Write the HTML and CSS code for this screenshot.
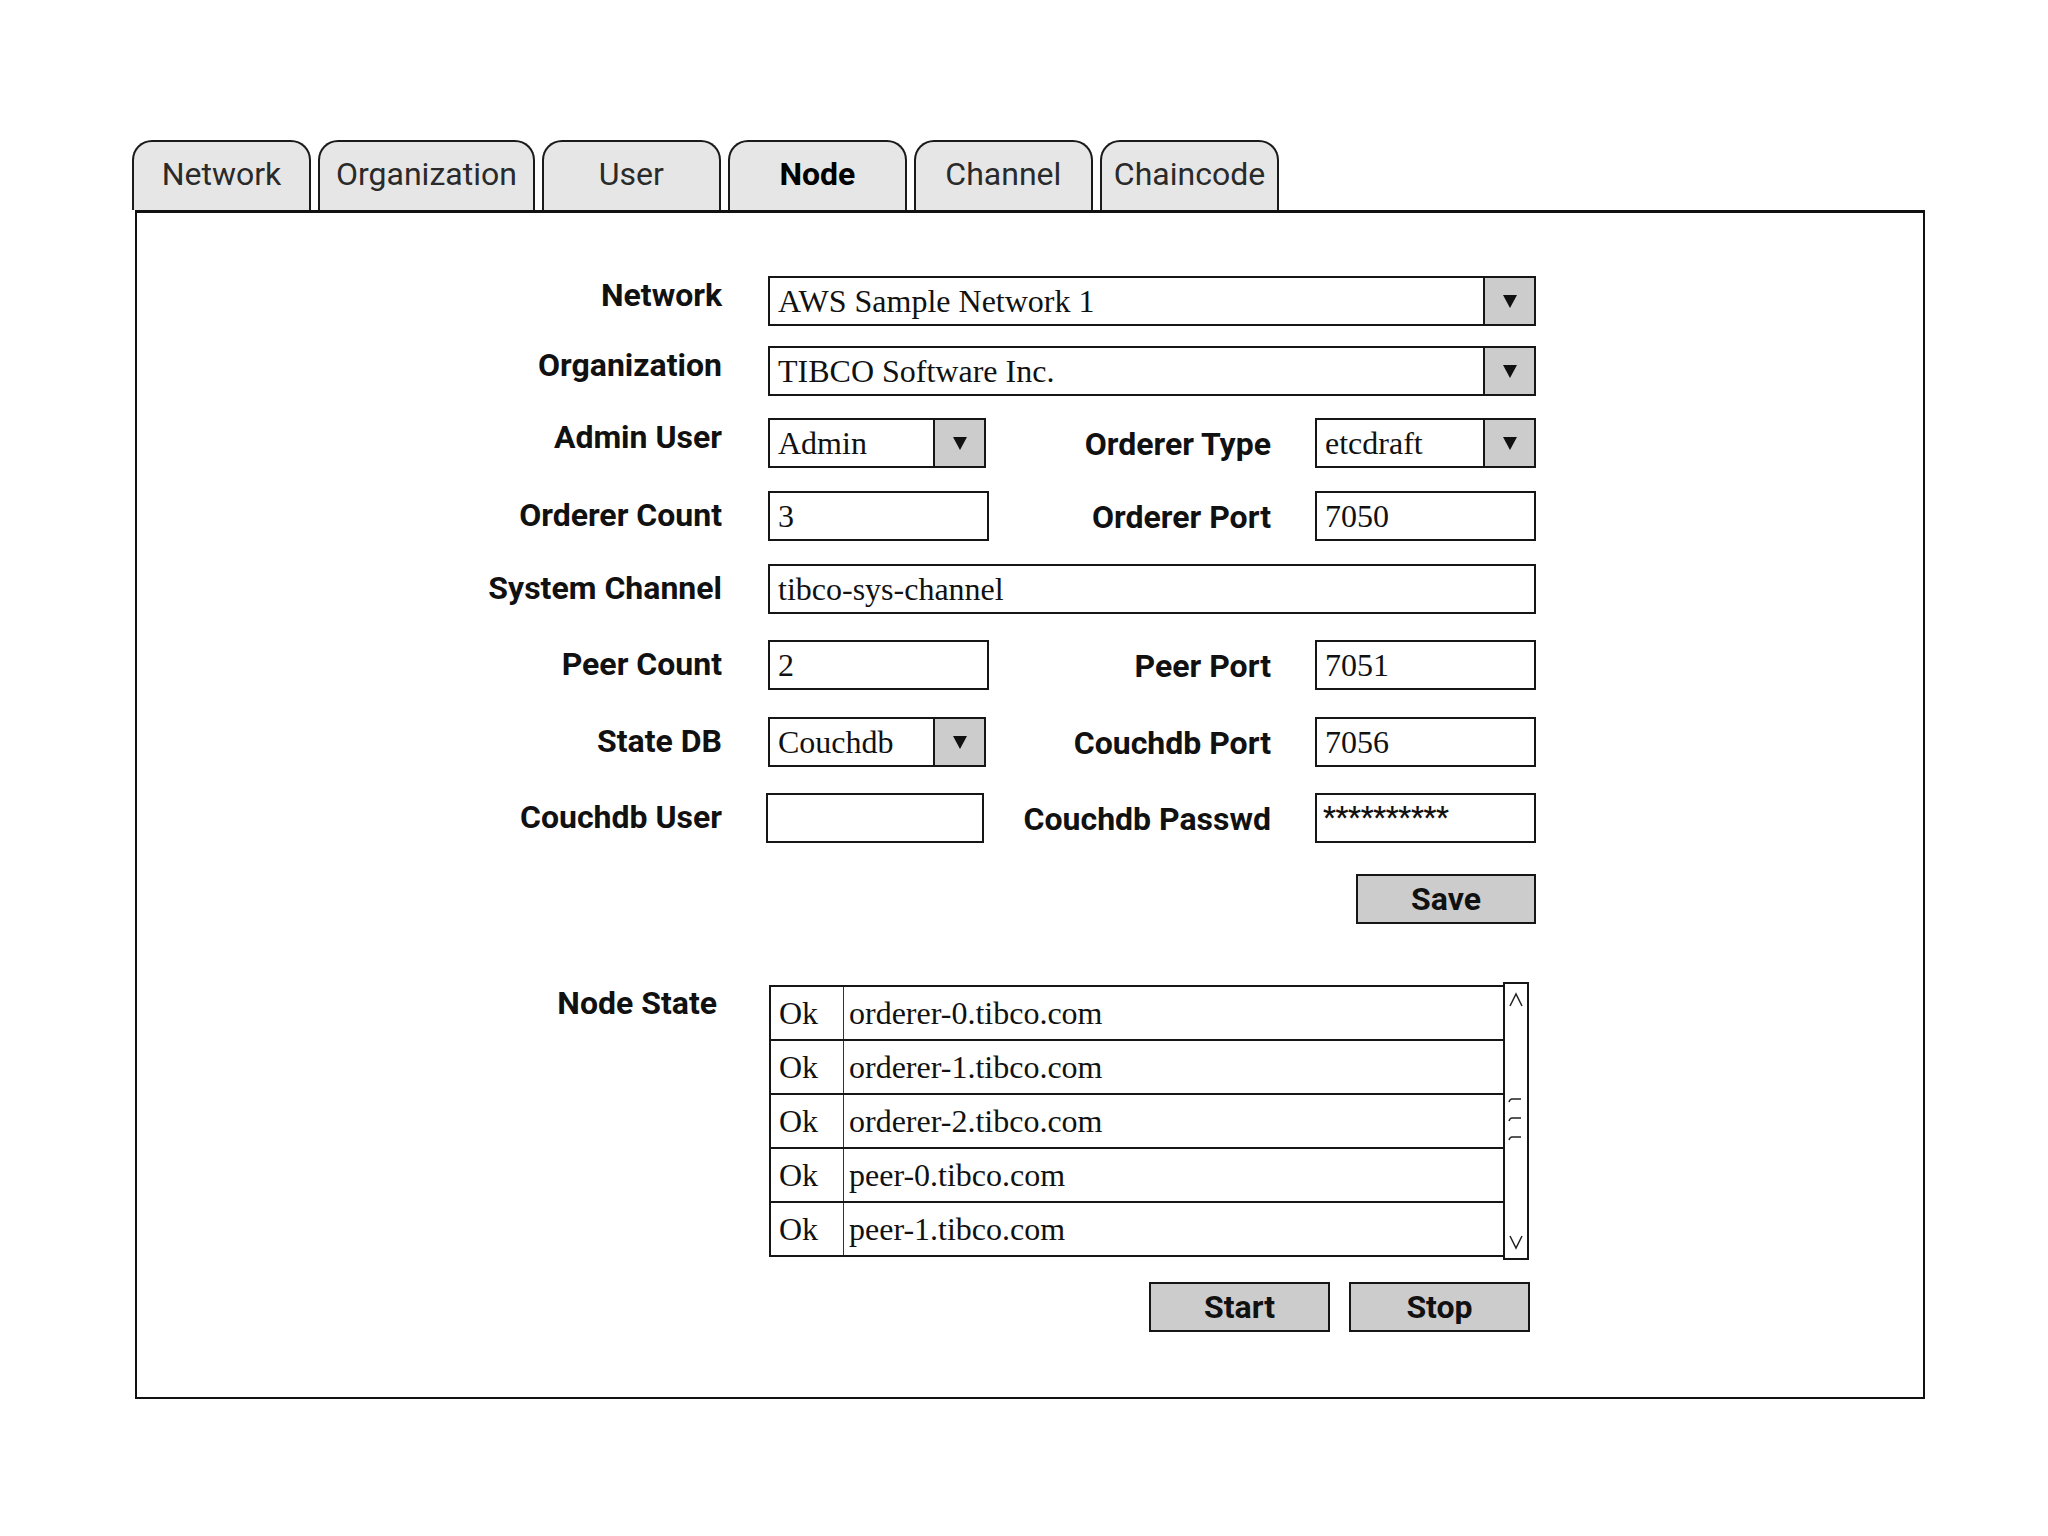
FILE: index.html
```html
<!DOCTYPE html>
<html lang="en">
<head>
<meta charset="utf-8">
<title>Node</title>
<link rel="stylesheet" href="styles.css">
</head>
<body>
<div class="page">
  <div class="tabs">
    <div class="tab">Network</div>
    <div class="tab">Organization</div>
    <div class="tab">User</div>
    <div class="tab active">Node</div>
    <div class="tab">Channel</div>
    <div class="tab tight">Chaincode</div>
  </div>
  <div class="panel">
    <div class="form">
      <div class="lbl up">Network</div>
      <div class="field select span">
        <span class="val">AWS Sample Network 1</span>
        <span class="arrow"><svg width="16" height="16" viewBox="0 0 16 16"><polygon points="1,2 15,2 8,15" fill="#111"/></svg></span>
      </div>

      <div class="lbl up">Organization</div>
      <div class="field select span">
        <span class="val">TIBCO Software Inc.</span>
        <span class="arrow"><svg width="16" height="16" viewBox="0 0 16 16"><polygon points="1,2 15,2 8,15" fill="#111"/></svg></span>
      </div>

      <div class="lbl up">Admin User</div>
      <div class="field select small">
        <span class="val">Admin</span>
        <span class="arrow"><svg width="16" height="16" viewBox="0 0 16 16"><polygon points="1,2 15,2 8,15" fill="#111"/></svg></span>
      </div>
      <div class="lbl lbl2">Orderer Type</div>
      <div class="field select">
        <span class="val">etcdraft</span>
        <span class="arrow"><svg width="16" height="16" viewBox="0 0 16 16"><polygon points="1,2 15,2 8,15" fill="#111"/></svg></span>
      </div>

      <div class="lbl">Orderer Count</div>
      <div class="field"><span class="val">3</span></div>
      <div class="lbl lbl2">Orderer Port</div>
      <div class="field"><span class="val">7050</span></div>

      <div class="lbl">System Channel</div>
      <div class="field span"><span class="val">tibco-sys-channel</span></div>

      <div class="lbl">Peer Count</div>
      <div class="field"><span class="val">2</span></div>
      <div class="lbl lbl2">Peer Port</div>
      <div class="field"><span class="val">7051</span></div>

      <div class="lbl">State DB</div>
      <div class="field select small">
        <span class="val">Couchdb</span>
        <span class="arrow"><svg width="16" height="16" viewBox="0 0 16 16"><polygon points="1,2 15,2 8,15" fill="#111"/></svg></span>
      </div>
      <div class="lbl lbl2">Couchdb Port</div>
      <div class="field"><span class="val">7056</span></div>

      <div class="lbl">Couchdb User</div>
      <div class="field small shift"></div>
      <div class="lbl lbl2">Couchdb Passwd</div>
      <div class="field"><span class="val pw">**********</span></div>

      <div class="save-cell"><button class="btn save">Save</button></div>
    </div>

    <div class="state">
      <div class="lbl state-lbl">Node State</div>
      <div class="state-body">
        <div class="list">
          <div class="rows">
            <div class="row"><span class="st">Ok</span><span class="host">orderer-0.tibco.com</span></div>
            <div class="row"><span class="st">Ok</span><span class="host">orderer-1.tibco.com</span></div>
            <div class="row"><span class="st">Ok</span><span class="host">orderer-2.tibco.com</span></div>
            <div class="row"><span class="st">Ok</span><span class="host">peer-0.tibco.com</span></div>
            <div class="row"><span class="st">Ok</span><span class="host">peer-1.tibco.com</span></div>
          </div>
          <div class="scroll">
            <svg width="22" height="274" viewBox="0 0 22 274">
              <polyline points="5,22 11,10 17,22" fill="none" stroke="#222" stroke-width="1.5"/>
              <path d="M4 118 q1 -3 3 -3 h9" fill="none" stroke="#222" stroke-width="1.5"/>
              <path d="M4 137 q1 -3 3 -3 h9" fill="none" stroke="#222" stroke-width="1.5"/>
              <path d="M4 156 q1 -3 3 -3 h9" fill="none" stroke="#222" stroke-width="1.5"/>
              <polyline points="5,252 11,264 17,252" fill="none" stroke="#222" stroke-width="1.5"/>
            </svg>
          </div>
        </div>
        <div class="actions">
          <button class="btn">Start</button>
          <button class="btn">Stop</button>
        </div>
      </div>
    </div>
  </div>
</div>
</body>
</html>
```
FILE: styles.css
```css
html, body {
  margin: 0;
  padding: 0;
  background: #ffffff;
}

.page {
  padding: 140px 0 0 132px;
  font-family: "Roboto", "Liberation Sans", sans-serif;
  color: #111;
}

.tabs {
  display: flex;
  gap: 7px;
  height: 70px;
  align-items: stretch;
}

.tab {
  box-sizing: border-box;
  min-width: 179px;
  padding: 0 16px 5px;
  border: 2px solid #1a1a1a;
  border-bottom: none;
  border-radius: 20px 20px 0 0;
  background: #e6e6e6;
  font-size: 32px;
  font-weight: 400;
  color: #2a2a2a;
  display: flex;
  align-items: center;
  justify-content: center;
}

.tab.tight {
  padding: 0 12px 5px;
}

.tab.active {
  font-weight: 700;
  color: #000;
}

.panel {
  box-sizing: border-box;
  margin-left: 3px;
  width: 1790px;
  height: 1189px;
  border: 2px solid #111;
  border-top-width: 3px;
  padding-top: 63px;
}

.form {
  display: grid;
  grid-template-columns: 631px 221px 326px 221px;
  grid-template-rows: 70px 72px 73px 73px 76px 77px 76px 81px 49px;
}

.lbl {
  box-sizing: border-box;
  padding-right: 46px;
  text-align: right;
  font-weight: 700;
  font-size: 32px;
  line-height: 48px;
  height: 50px;
  color: #111;
  white-space: nowrap;
}

.lbl.up {
  line-height: 38px;
}

.lbl2 {
  grid-column: 3;
  padding-right: 44px;
  line-height: 52px;
}

.field {
  box-sizing: border-box;
  height: 50px;
  width: 221px;
  border: 2px solid #161616;
  background: #fff;
  display: flex;
  align-items: center;
  font-family: "Liberation Serif", "Times New Roman", serif;
  font-size: 32px;
  color: #111;
}

.field.small {
  width: 218px;
}

.field.shift {
  margin-left: -2px;
}

.field.span {
  grid-column: 2 / 5;
  width: 768px;
}

.val {
  flex: 1;
  padding-left: 8px;
  white-space: nowrap;
  overflow: hidden;
}

.val.pw {
  font-family: "Roboto", "Liberation Sans", sans-serif;
  font-weight: 500;
  font-size: 29px;
  padding-left: 6px;
  padding-bottom: 2px;
  letter-spacing: -0.3px;
}

.arrow {
  width: 49px;
  align-self: stretch;
  border-left: 2px solid #161616;
  background: #cccccc;
  display: flex;
  align-items: center;
  justify-content: center;
}

.save-cell {
  grid-column: 4;
  display: flex;
  justify-content: flex-end;
  align-items: start;
}

.btn {
  box-sizing: border-box;
  width: 181px;
  height: 50px;
  border: 2px solid #161616;
  background: #cccccc;
  font-family: "Roboto", "Liberation Sans", sans-serif;
  font-weight: 700;
  font-size: 32px;
  color: #111;
  padding: 0;
  margin: 0;
}

.btn.save {
  width: 180px;
}

.state {
  display: grid;
  grid-template-columns: 631px 762px;
  margin-top: 62px;
}

.state-lbl {
  padding-right: 51px;
  line-height: 36px;
  height: 36px;
}

.state-body {
  padding-left: 1px;
}

.list {
  display: flex;
  align-items: flex-start;
}

.rows {
  box-sizing: border-box;
  width: 734px;
  border: 2px solid #161616;
  border-right: none;
  font-family: "Liberation Serif", "Times New Roman", serif;
  font-size: 32px;
  color: #111;
}

.row {
  display: flex;
  height: 52px;
  align-items: stretch;
  border-bottom: 2px solid #161616;
}

.row:last-child {
  border-bottom: none;
}

.st {
  box-sizing: border-box;
  width: 73px;
  padding-left: 8px;
  border-right: 1px solid #333;
  display: flex;
  align-items: center;
}

.host {
  padding-left: 5px;
  display: flex;
  align-items: center;
}

.scroll {
  box-sizing: border-box;
  width: 26px;
  height: 278px;
  margin-top: -3px;
  border: 2px solid #161616;
  background: #fff;
  display: flex;
}

.actions {
  display: flex;
  justify-content: flex-end;
  gap: 19px;
  width: 761px;
  margin-top: 22px;
}
```
